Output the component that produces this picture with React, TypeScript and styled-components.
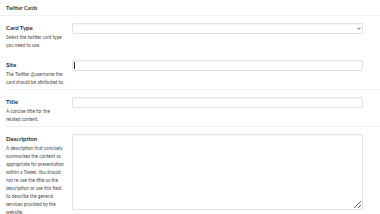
import React from "react";
import styled, { createGlobalStyle } from "styled-components";

const Global = createGlobalStyle`
  html, body { margin: 0; padding: 0; background: #fff; }
  body { font-family: Lato, "Open Sans", sans-serif; color: #333; }
  * { box-sizing: border-box; }
`;

const Page = styled.div`
  width: 380px;
  height: 214px;
  overflow: hidden;
  background: #fff;
`;

const Header = styled.div`
  height: 16px;
  padding: 0 6px;
  display: flex;
  align-items: center;
  font-size: 5.3px;
  font-weight: 700;
  color: #3a3a3a;
  border-bottom: 1px solid #f1f1f1;
`;

const Row = styled.div<{ $line?: boolean }>`
  display: grid;
  grid-template-columns: 66px 291px;
  margin-left: 6px;
  padding: 7px 0 3px;
  border-bottom: 1px solid ${(p) => (p.$line ? "#f1f1f1" : "transparent")};
`;

const Info = styled.div`
  display: flex;
  flex-direction: column;
`;

const Label = styled.div`
  font-size: 6px;
  font-weight: 700;
  line-height: 10px;
  color: #2e2e2e;
`;

const Help = styled.div<{ $width?: number }>`
  font-size: 4.7px;
  line-height: 8px;
  color: #4a4a4a;
  max-width: ${(p) => p.$width ?? 60}px;
`;

const Field = styled.div`
  position: relative;
`;

const baseInput = `
  display: block;
  width: 100%;
  margin: 0;
  border: 1px solid #e3e3e3;
  border-radius: 1px;
  background: #fff;
  box-shadow: inset 0 1px 1px rgba(0,0,0,0.04);
  font-family: Lato, sans-serif;
  font-size: 6px;
  outline: none;
  color: #333;
`;

const TextInput = styled.input`
  ${baseInput}
  height: 11px;
  padding: 0 3px;
`;

const Select = styled.select`
  ${baseInput}
  height: 11px;
  padding: 0 3px;
  appearance: none;
  -webkit-appearance: none;
`;

const Chevron = styled.svg`
  position: absolute;
  right: 2px;
  top: 4px;
  width: 4px;
  height: 3px;
  pointer-events: none;
`;

const Caret = styled.span`
  position: absolute;
  left: 2px;
  top: 2px;
  width: 1px;
  height: 7px;
  background: #222;
`;

const TextArea = styled.textarea`
  ${baseInput}
  height: 76px;
  padding: 2px 3px;
  resize: vertical;
`;

export default function App() {
  return (
    <Page>
      <Global />
      <Header>Twitter Cards</Header>
      <Row>
        <Info>
          <Label>Card Type</Label>
          <Help>Select the twitter card type you need to use.</Help>
        </Info>
        <Field>
          <Select defaultValue="">
            <option value=""></option>
            <option value="summary">Summary</option>
          </Select>
          <Chevron viewBox="0 0 8 6">
            <path d="M1 1.5 L4 4.5 L7 1.5" fill="none" stroke="#333" strokeWidth="1.6" />
          </Chevron>
        </Field>
      </Row>
      <Row $line>
        <Info>
          <Label>Site</Label>
          <Help>The Twitter @username the card should be attributed to.</Help>
        </Info>
        <Field>
          <TextInput type="text" />
          <Caret />
        </Field>
      </Row>
      <Row $line>
        <Info>
          <Label>Title</Label>
          <Help $width={54}>A concise title for the related content.</Help>
        </Info>
        <Field>
          <TextInput type="text" />
        </Field>
      </Row>
      <Row>
        <Info>
          <Label>Description</Label>
          <Help>
            A description that concisely summarizes the content as appropriate for presentation
            within a Tweet. You should not re-use the title as the description or use this field
            to describe the general services provided by the website.
          </Help>
        </Info>
        <Field>
          <TextArea />
        </Field>
      </Row>
    </Page>
  );
}
